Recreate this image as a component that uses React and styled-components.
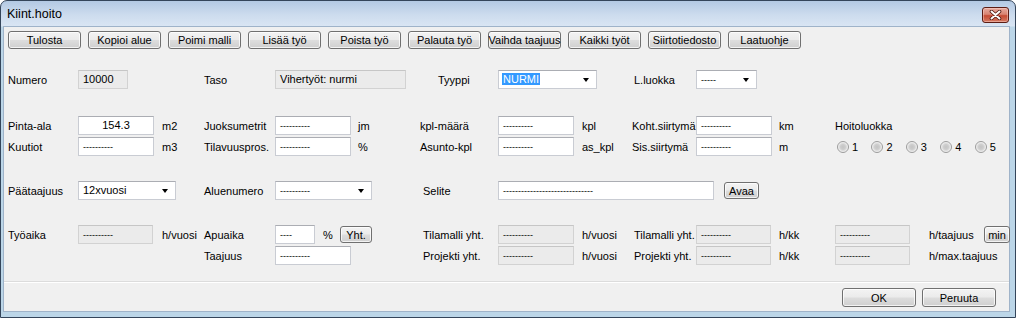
import styled, { createGlobalStyle } from "styled-components";

const GlobalStyle = createGlobalStyle`
  html, body { margin: 0; padding: 0; background: #ffffff; }
  body {
    font-family: "Liberation Sans", Arial, sans-serif;
    font-size: 11px;
    color: #000;
  }
`;

// column starts: 8 78 162 204 275 358 420 498 582 632 696 779 835 929 984
const COLS =
  "70px 84px 42px 71px 83px 62px 78px 84px 50px 64px 83px 56px 94px 55px 1fr";

const Window = styled.div`
  width: 1016px;
  height: 318px;
  box-sizing: border-box;
  border: 1px solid #34455a;
  border-radius: 7px 7px 0 0;
  background: linear-gradient(
    to bottom,
    #b3c9e3 0px,
    #cddcee 14px,
    #d9e5f3 25px,
    #bcd6e8 26px,
    #bcd6e8 100%
  );
  display: flex;
  flex-direction: column;
  overflow: hidden;
`;

const TitleBar = styled.div`
  height: 25px;
  flex: none;
  display: flex;
  align-items: center;
  justify-content: space-between;
  padding: 0 6px 0 6px;
`;

const Title = styled.span`
  font-size: 12.5px;
  color: #000;
  margin-top: 1px;
`;

const CloseBox = styled.div`
  width: 27px;
  height: 16px;
  box-sizing: border-box;
  margin-top: 3px;
  border: 1px solid #5c1d14;
  border-radius: 3px;
  background: linear-gradient(
    to bottom,
    #e6aa9f 0%,
    #d98472 45%,
    #c54b34 55%,
    #d57a62 100%
  );
  box-shadow: inset 0 0 0 1px rgba(255, 220, 210, 0.45);
  display: flex;
  align-items: center;
  justify-content: center;
`;

const Client = styled.div`
  flex: 1;
  margin: 0 5px 5px 2px;
  border: 1px solid #9fb3c9;
  background: #f0f0f0;
  display: flex;
  flex-direction: column;
`;

const Toolbar = styled.div`
  display: flex;
  gap: 7px;
  padding: 4px 0 0 4px;
`;

const Button = styled.button`
  width: ${(p) => p.$w || 73}px;
  height: ${(p) => p.$h || 18}px;
  box-sizing: border-box;
  padding: 0;
  font: 11px "Liberation Sans", Arial, sans-serif;
  color: #000;
  border: 1px solid #707070;
  border-radius: 3px;
  background: linear-gradient(
    to bottom,
    #f3f3f3 0%,
    #ebebeb 48%,
    #dddddd 52%,
    #cfcfcf 100%
  );
  box-shadow: inset 0 0 0 1px rgba(255, 255, 255, 0.75);
  white-space: nowrap;
  display: flex;
  align-items: center;
  justify-content: center;
  grid-column: ${(p) => p.$col || "auto"};
`;

const Form = styled.div`
  padding-left: 4px;
`;

const Grid = styled.div`
  display: grid;
  grid-template-columns: ${COLS};
  grid-auto-rows: 19px;
  row-gap: 2px;
  align-items: center;
  margin-top: ${(p) => p.$mt}px;
`;

const Label = styled.span`
  grid-column: ${(p) => p.$col};
  grid-row: ${(p) => p.$row || 1};
  padding-left: ${(p) => p.$indent || 0}px;
  white-space: nowrap;
`;

const Field = styled.div`
  grid-column: ${(p) => p.$col || "auto"};
  grid-row: ${(p) => p.$row || 1};
  width: ${(p) => p.$w}px;
  height: 19px;
  box-sizing: border-box;
  border: 1px solid ${(p) => (p.$ro ? "#d2d2d2" : "#c9ccd3")};
  border-top-color: ${(p) => (p.$ro ? "#c6c6c6" : "#abadb3")};
  background: ${(p) => (p.$ro ? "#ebebeb" : "#ffffff")};
  padding: 0 ${(p) => (p.$center ? 0 : 4)}px;
  line-height: 17px;
  text-align: ${(p) => (p.$center ? "center" : "left")};
  white-space: nowrap;
  overflow: hidden;
  position: relative;
`;

const Dashes = styled.span`
  font-size: 9px;
`;

const Selected = styled.span`
  background: #3399ff;
  color: #fff;
  padding: 0 1px;
  margin-left: -1px;
`;

const Arrow = styled.span`
  position: absolute;
  right: 7px;
  top: 7px;
  width: 0;
  height: 0;
  border-left: 3.5px solid transparent;
  border-right: 3.5px solid transparent;
  border-top: 4px solid #000;
`;

const Inline = styled.div`
  grid-column: ${(p) => p.$col};
  grid-row: ${(p) => p.$row || 1};
  display: flex;
  align-items: center;
  gap: ${(p) => p.$gap || 0}px;
  padding-left: ${(p) => p.$indent || 0}px;
`;

const Pct = styled.span`
  width: 17px;
  padding-left: 8px;
`;

const RadioItem = styled.label`
  display: flex;
  align-items: center;
  gap: 3px;
  width: ${(p) => p.$w || 35}px;
`;

const RadioDot = styled.span`
  width: 12px;
  height: 12px;
  box-sizing: border-box;
  border-radius: 50%;
  border: 1px solid #9c9c9c;
  background: radial-gradient(
    circle at 50% 50%,
    #c4c4c4 0px,
    #cdcdcd 2.5px,
    #e2e2e2 4px,
    #f6f6f6 5px
  );
`;

const Footer = styled.div`
  margin-top: auto;
  border-top: 1px solid #dcdcdc;
  box-shadow: inset 0 1px 0 #ffffff;
  display: flex;
  justify-content: flex-end;
  gap: 6px;
  padding: 6px 13px 4px 0;
`;

const Combo = ({ col, w, children }) => (
  <Field $col={col} $w={w}>
    {children}
    <Arrow />
  </Field>
);

const D10 = () => <Dashes>----------</Dashes>;

const CloseIcon = () => (
  <svg width="13" height="10" viewBox="0 0 13 10">
    <path
      d="M2.5 1.5 L10.5 8.5 M10.5 1.5 L2.5 8.5"
      stroke="#4a140c"
      strokeWidth="3.6"
      strokeLinecap="round"
    />
    <path
      d="M2.5 1.5 L10.5 8.5 M10.5 1.5 L2.5 8.5"
      stroke="#ffffff"
      strokeWidth="2"
      strokeLinecap="round"
    />
  </svg>
);

const tools = [
  "Tulosta",
  "Kopioi alue",
  "Poimi malli",
  "Lisää työ",
  "Poista työ",
  "Palauta työ",
  "Vaihda taajuus",
  "Kaikki työt",
  "Siirtotiedosto",
  "Laatuohje",
];

export default function App() {
  return (
    <>
      <GlobalStyle />
      <Window>
        <TitleBar>
          <Title>Kiint.hoito</Title>
          <CloseBox>
            <CloseIcon />
          </CloseBox>
        </TitleBar>
        <Client>
          <Toolbar>
            {tools.map((t) => (
              <Button key={t}>{t}</Button>
            ))}
          </Toolbar>

          <Form>
            <Grid $mt={21}>
              <Label $col={1}>Numero</Label>
              <Field $col={2} $w={50} $ro>
                10000
              </Field>
              <Label $col={4}>Taso</Label>
              <Field $col="5 / span 2" $w={131} $ro>
                Vihertyöt: nurmi
              </Field>
              <Label $col={7} $indent={18}>
                Tyyppi
              </Label>
              <Combo col="8 / span 2" w={99}>
                <Selected>NURMI</Selected>
              </Combo>
              <Label $col={10} $indent={2}>
                L.luokka
              </Label>
              <Combo col={11} w={61}>
                <Dashes>-----</Dashes>
              </Combo>
            </Grid>

            <Grid $mt={27}>
              <Label $col={1}>Pinta-ala</Label>
              <Field $col={2} $w={76} $center>
                154.3
              </Field>
              <Label $col={3}>m2</Label>
              <Label $col={4}>Juoksumetrit</Label>
              <Field $col={5} $w={76}>
                <D10 />
              </Field>
              <Label $col={6}>jm</Label>
              <Label $col={7}>kpl-määrä</Label>
              <Field $col={8} $w={76}>
                <D10 />
              </Field>
              <Label $col={9}>kpl</Label>
              <Label $col={10}>Koht.siirtymä</Label>
              <Field $col={11} $w={76}>
                <D10 />
              </Field>
              <Label $col={12}>km</Label>
              <Label $col={13}>Hoitoluokka</Label>

              <Label $col={1} $row={2}>Kuutiot</Label>
              <Field $col={2} $row={2} $w={76}>
                <D10 />
              </Field>
              <Label $col={3} $row={2}>m3</Label>
              <Label $col={4} $row={2}>Tilavuuspros.</Label>
              <Field $col={5} $row={2} $w={76}>
                <D10 />
              </Field>
              <Label $col={6} $row={2}>%</Label>
              <Label $col={7} $row={2}>Asunto-kpl</Label>
              <Field $col={8} $row={2} $w={76}>
                <D10 />
              </Field>
              <Label $col={9} $row={2}>as_kpl</Label>
              <Label $col={10} $row={2}>Sis.siirtymä</Label>
              <Field $col={11} $row={2} $w={76}>
                <D10 />
              </Field>
              <Label $col={12} $row={2}>m</Label>
              <Inline $col="13 / span 3" $row={2} $indent={2}>
                {[1, 2, 3, 4, 5].map((n) => (
                  <RadioItem key={n}>
                    <RadioDot />
                    {n}
                  </RadioItem>
                ))}
              </Inline>
            </Grid>

            <Grid $mt={25}>
              <Label $col={1}>Päätaajuus</Label>
              <Combo col="2 / span 2" w={98}>
                12xvuosi
              </Combo>
              <Label $col={4}>Aluenumero</Label>
              <Combo col="5 / span 2" w={97}>
                <D10 />
              </Combo>
              <Label $col={7} $indent={3}>
                Selite
              </Label>
              <Inline $col="8 / span 7" $gap={10}>
                <Field $w={216}>
                  <Dashes>------------------------------</Dashes>
                </Field>
                <Button $w={35} $h={17}>
                  Avaa
                </Button>
              </Inline>
            </Grid>

            <Grid $mt={25}>
              <Label $col={1}>Työaika</Label>
              <Field $col={2} $w={75} $ro>
                <D10 />
              </Field>
              <Label $col={3}>h/vuosi</Label>
              <Label $col={4}>Apuaika</Label>
              <Inline $col="5 / span 2">
                <Field $w={40}>
                  <Dashes>----</Dashes>
                </Field>
                <Pct>%</Pct>
                <Button $w={32} $h={17}>
                  Yht.
                </Button>
              </Inline>
              <Label $col={7} $indent={3}>
                Tilamalli yht.
              </Label>
              <Field $col={8} $w={76} $ro>
                <D10 />
              </Field>
              <Label $col={9}>h/vuosi</Label>
              <Label $col={10} $indent={2}>
                Tilamalli yht.
              </Label>
              <Field $col={11} $w={75} $ro>
                <D10 />
              </Field>
              <Label $col={12}>h/kk</Label>
              <Field $col={13} $w={75} $ro>
                <D10 />
              </Field>
              <Label $col={14}>h/taajuus</Label>
              <Button $col={15} $w={26} $h={17}>
                min
              </Button>

              <Label $col={4} $row={2}>
                Taajuus
              </Label>
              <Field $col={5} $row={2} $w={76}>
                <D10 />
              </Field>
              <Label $col={7} $row={2} $indent={3}>
                Projekti yht.
              </Label>
              <Field $col={8} $row={2} $w={76} $ro>
                <D10 />
              </Field>
              <Label $col={9} $row={2}>
                h/vuosi
              </Label>
              <Label $col={10} $row={2} $indent={2}>
                Projekti yht.
              </Label>
              <Field $col={11} $row={2} $w={75} $ro>
                <D10 />
              </Field>
              <Label $col={12} $row={2}>
                h/kk
              </Label>
              <Field $col={13} $row={2} $w={75} $ro>
                <D10 />
              </Field>
              <Label $col={14} $row={2}>
                h/max.taajuus
              </Label>
            </Grid>
          </Form>

          <Footer>
            <Button $w={74} $h={19}>
              OK
            </Button>
            <Button $w={74} $h={19}>
              Peruuta
            </Button>
          </Footer>
        </Client>
      </Window>
    </>
  );
}
